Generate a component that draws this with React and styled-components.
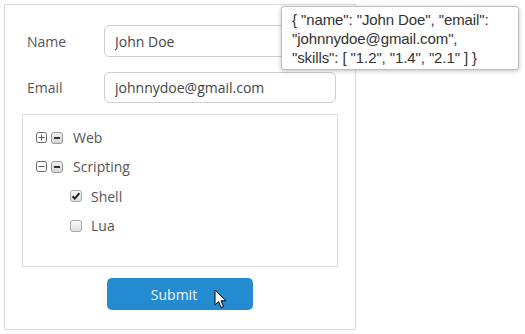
import React from "react";
import styled, { createGlobalStyle } from "styled-components";

const Global = createGlobalStyle`
  html, body { margin: 0; padding: 0; background: #fff; }
  body { font-family: "Open Sans", "Noto Sans", sans-serif; }
`;

const Page = styled.div`
  position: relative;
  width: 525px;
  height: 334px;
  padding: 4px 0 0 4px;
  box-sizing: border-box;
`;

const Panel = styled.form`
  width: 352px;
  height: 326px;
  box-sizing: border-box;
  border: 1px solid #dcdcdc;
  padding: 20px 18px 0 17px;
  display: flex;
  flex-direction: column;
`;

const FieldRow = styled.div`
  display: flex;
  align-items: center;
  height: 32px;
  margin-bottom: ${(p) => p.$mb || 0}px;
  padding-left: 5px;
`;

const Label = styled.label`
  width: 77px;
  font-size: 14px;
  color: #555;
`;

const Input = styled.input`
  width: 232px;
  height: ${(p) => p.$h || 32}px;
  box-sizing: border-box;
  border: 1px solid #cfcfcf;
  border-radius: 5px;
  padding: 0 10px;
  font-family: inherit;
  font-size: 14px;
  color: #444;
  outline: none;
`;

const TreeBox = styled.div`
  width: 316px;
  height: 153px;
  box-sizing: border-box;
  border: 1px solid #dcdcdc;
  margin-top: 11px;
  padding: 8px 0 0 13px;
`;

const TreeRow = styled.div`
  display: flex;
  align-items: center;
  height: 29.3px;
  padding-left: ${(p) => p.$indent || 0}px;
  gap: 4px;
  font-size: 14px;
  color: #555;
`;

const ItemText = styled.span`
  margin-left: ${(p) => p.$ml || 6}px;
`;

const ButtonRow = styled.div`
  display: flex;
  padding-left: 85px;
  margin-top: 11px;
`;

const SubmitButton = styled.button`
  width: 146px;
  height: 32px;
  border: none;
  border-radius: 5px;
  background: #258bd0;
  color: #f4f6ff;
  font-family: inherit;
  font-size: 14px;
  padding: 0 12px 0 0;
`;

const Tooltip = styled.div`
  position: absolute;
  left: 281px;
  top: 6px;
  width: 238px;
  height: 64px;
  box-sizing: border-box;
  border: 1px solid #bdbdbd;
  border-radius: 3px;
  box-shadow: 0 1px 4px rgba(0, 0, 0, 0.25);
  background: #fff;
  padding: 3px 4px 0 10px;
  font-family: "Liberation Sans", Arial, sans-serif;
  font-size: 15px;
  line-height: 19px;
  letter-spacing: -0.1px;
  color: #333;
`;

const Cursor = styled.svg`
  position: absolute;
  left: 214px;
  top: 289px;
`;

const Expander = ({ open }) => (
  <svg width="11" height="11" viewBox="0 0 11 11">
    <rect x="0.5" y="0.5" width="10" height="10" rx="2" fill="#fff" stroke="#666" />
    <line x1="2.5" y1="5.5" x2="8.5" y2="5.5" stroke="#555" />
    {!open && <line x1="5.5" y1="2.5" x2="5.5" y2="8.5" stroke="#555" />}
  </svg>
);

const Partial = () => (
  <svg width="12" height="12" viewBox="0 0 12 12">
    <defs>
      <linearGradient id="pg" x1="0" y1="0" x2="0" y2="1">
        <stop offset="0" stopColor="#f2f2f2" />
        <stop offset="1" stopColor="#d4d4d4" />
      </linearGradient>
    </defs>
    <rect x="0.5" y="0.5" width="11" height="11" rx="2.5" fill="url(#pg)" stroke="#9a9a9a" />
    <rect x="3" y="5" width="6" height="2" fill="#333" />
  </svg>
);

const Check = ({ checked }) => (
  <svg width="12" height="12" viewBox="0 0 12 12">
    <defs>
      <linearGradient id="cg" x1="0" y1="0" x2="0" y2="1">
        <stop offset="0" stopColor="#fbfbfb" />
        <stop offset="1" stopColor="#dcdcdc" />
      </linearGradient>
    </defs>
    <rect x="0.5" y="0.5" width="11" height="11" rx="2.5" fill="url(#cg)" stroke="#a8a8a8" />
    {checked && (
      <path d="M2.6 6.2 L4.8 8.6 L9.4 3.2" fill="none" stroke="#222" strokeWidth="2" />
    )}
  </svg>
);

export default function App() {
  return (
    <Page>
      <Global />
      <Panel onSubmit={(e) => e.preventDefault()}>
        <FieldRow $mb={14}>
          <Label>Name</Label>
          <Input defaultValue="John Doe" />
        </FieldRow>
        <FieldRow>
          <Label>Email</Label>
          <Input defaultValue="johnnydoe@gmail.com" $h={31} />
        </FieldRow>
        <TreeBox>
          <TreeRow>
            <Expander open={false} />
            <Partial />
            <ItemText>Web</ItemText>
          </TreeRow>
          <TreeRow>
            <Expander open />
            <Partial />
            <ItemText>Scripting</ItemText>
          </TreeRow>
          <TreeRow $indent={34}>
            <Check checked />
            <ItemText $ml={5}>Shell</ItemText>
          </TreeRow>
          <TreeRow $indent={34}>
            <Check />
            <ItemText $ml={5}>Lua</ItemText>
          </TreeRow>
        </TreeBox>
        <ButtonRow>
          <SubmitButton type="submit">Submit</SubmitButton>
        </ButtonRow>
      </Panel>
      <Tooltip>
        {'{ "name": "John Doe", "email":'}
        <br />
        {'"johnnydoe@gmail.com",'}
        <br />
        {'"skills": [ "1.2", "1.4", "2.1" ] }'}
      </Tooltip>
      <Cursor width="14" height="21" viewBox="0 0 14 21">
        <path d="M1 1 L1 16 L4.5 12.5 L7 18.5 L9.5 17.5 L7 11.8 L12 11.8 Z" fill="#fff" stroke="#000" strokeWidth="1" strokeLinejoin="round" />
      </Cursor>
    </Page>
  );
}
